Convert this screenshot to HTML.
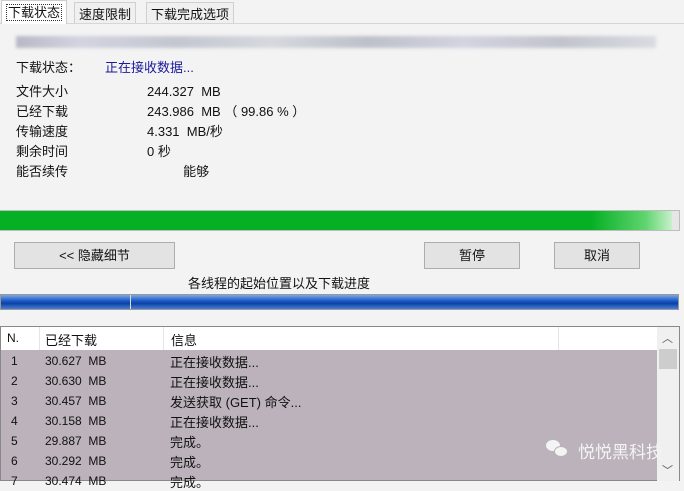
<!DOCTYPE html>
<html><head><meta charset="utf-8"><style>
*{margin:0;padding:0;box-sizing:border-box}
body{width:684px;height:481px;overflow:hidden;background:#f3f3f3;font-family:"Liberation Sans","Noto Sans CJK SC",sans-serif;font-size:13px;color:#111;position:relative}
.a{position:absolute;white-space:nowrap}
.tab{position:absolute;top:2px;height:21px;border:1px solid #d0d0d0;border-bottom:none;background:#f0f0f0;padding:1px 4px;font-size:13px}
.btn{position:absolute;top:242px;height:27px;border:1px solid #adadad;background:#e3e3e3;text-align:center;line-height:25px;font-size:13px}
.row{position:absolute;left:0;width:657px;height:20px;font-size:12px}
.row span{position:absolute;top:3px}
</style></head><body>
<div class="a" style="left:0;top:23px;width:684px;height:1px;background:#d6d6d6"></div>
<div class="tab" style="left:1px;top:0;height:24px;background:#fff;border-color:#ccc"><span style="border:1px dotted #333;padding:0 1px">下载状态</span></div>
<div class="tab" style="left:74px">速度限制</div>
<div class="tab" style="left:146px">下载完成选项</div>
<div class="a" style="left:16px;top:36px;width:640px;height:12px;background:linear-gradient(90deg,#aab 0,#ccd 10%,#b8bcc8 25%,#d0d2da 40%,#b0b4c0 55%,#ccd 70%,#b6b8c4 85%,#d4d6de 100%);filter:blur(1.5px);opacity:.8"></div>
<div class="a" style="left:16px;top:57px">下载状态：</div>
<div class="a" style="left:105px;top:57px;color:#1a1a9a">正在接收数据...</div>
<div class="a" style="left:16px;top:82px;line-height:20px">文件大小<br>已经下载<br>传输速度<br>剩余时间<br>能否续传</div>
<div class="a" style="left:147px;top:82px;line-height:20px">244.327&nbsp; MB<br>243.986&nbsp; MB （ 99.86 % ）<br>4.331&nbsp; MB/秒<br>0 秒<br>&nbsp;&nbsp;&nbsp;&nbsp;&nbsp;&nbsp;&nbsp;&nbsp;&nbsp;&nbsp;能够</div>
<div class="a" style="left:0;top:210px;width:680px;height:21px;border:1px solid #bcbcbc;background:#e6e6e6"></div>
<div class="a" style="left:0;top:211px;width:672px;height:19px;background:linear-gradient(90deg,#06b025 0,#06b025 88%,#5fd46f 96%,#c8f0cc 100%)"></div>
<div class="btn" style="left:14px;width:161px">&lt;&lt; 隐藏细节</div>
<div class="btn" style="left:424px;width:96px">暂停</div>
<div class="btn" style="left:554px;width:86px">取消</div>
<div class="a" style="left:188px;top:273px">各线程的起始位置以及下载进度</div>
<div class="a" style="left:0;top:294px;width:679px;height:16px;border:1px solid #999;background:linear-gradient(#7fa8e0,#1e5cc8 40%,#0b40a8 60%,#4a7fd0)"></div>
<div class="a" style="left:130px;top:295px;width:1px;height:14px;background:#ddd"></div>
<div class="a" style="left:0;top:326px;width:680px;height:155px;border:1px solid #888;background:#bbb2bb"></div>
<div class="a" style="left:1px;top:327px;width:656px;height:23px;background:#fff;font-size:13px">
<span class="a" style="left:6px;top:4px;font-size:12px">N.</span>
<span class="a" style="left:38px;top:0;width:1px;height:23px;background:#e5e5e5"></span>
<span class="a" style="left:44px;top:3px">已经下载</span>
<span class="a" style="left:162px;top:0;width:1px;height:23px;background:#e5e5e5"></span>
<span class="a" style="left:170px;top:3px">信息</span>
<span class="a" style="left:557px;top:0;width:1px;height:23px;background:#e5e5e5"></span>
</div>
<div class="a" style="left:657px;top:327px;width:22px;height:154px;background:#f0f0f0"></div>
<div class="a" style="left:662px;top:330px;font-size:11px;color:#555">︿</div>
<div class="a" style="left:659px;top:349px;width:18px;height:20px;background:#cdcdcd"></div>
<div class="a" style="left:662px;top:462px;font-size:11px;color:#555">﹀</div>
<div class="row" style="top:351px"><span style="left:11px">1</span><span style="left:45px">30.627&nbsp; MB</span><span style="left:170px;font-size:13px;top:1px">正在接收数据...</span></div>
<div class="row" style="top:371px"><span style="left:11px">2</span><span style="left:45px">30.630&nbsp; MB</span><span style="left:170px;font-size:13px;top:1px">正在接收数据...</span></div>
<div class="row" style="top:391px"><span style="left:11px">3</span><span style="left:45px">30.457&nbsp; MB</span><span style="left:170px;font-size:13px;top:1px">发送获取 (GET) 命令...</span></div>
<div class="row" style="top:411px"><span style="left:11px">4</span><span style="left:45px">30.158&nbsp; MB</span><span style="left:170px;font-size:13px;top:1px">正在接收数据...</span></div>
<div class="row" style="top:431px"><span style="left:11px">5</span><span style="left:45px">29.887&nbsp; MB</span><span style="left:170px;font-size:13px;top:1px">完成。</span></div>
<div class="row" style="top:451px"><span style="left:11px">6</span><span style="left:45px">30.292&nbsp; MB</span><span style="left:170px;font-size:13px;top:1px">完成。</span></div>
<div class="row" style="top:471px"><span style="left:11px">7</span><span style="left:45px">30.474&nbsp; MB</span><span style="left:170px;font-size:13px;top:1px">完成。</span></div>
<div class="a" style="left:546px;top:440px;width:14px;height:11px;border-radius:50%;background:#f4f4f4"></div>
<div class="a" style="left:554px;top:446px;width:14px;height:11px;border-radius:50%;background:#f4f4f4;border:1px solid #bbb2bb"></div>
<div class="a" style="left:578px;top:438px;font-size:17px;color:#f4f4f4">悦悦黑科技</div>
</body></html>
